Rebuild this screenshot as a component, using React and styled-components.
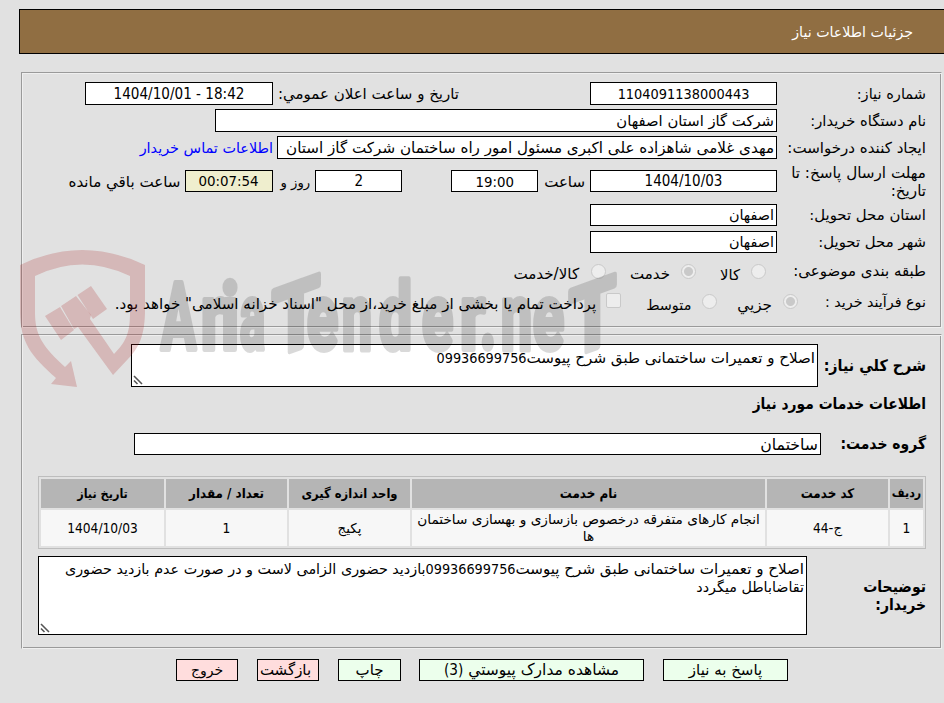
import React from 'react';
import styled, { createGlobalStyle } from 'styled-components';

const condensed = '"DejaVu Sans Condensed", "DejaVu Sans", sans-serif';

const GlobalStyle = createGlobalStyle`
    body {
        margin: 0;
        background-color: #e1e1e1;
        color: #000;
        font-family: "DejaVu Sans", sans-serif;
        font-size: 15px;
    }
    * {
        box-sizing: border-box;
    }
`;

const Page = styled.div`
    direction: rtl;
    position: relative;
    width: 944px;
    height: 703px;
    padding-top: 9px;
    overflow: hidden;
`;

const Header = styled.header`
    height: 45px;
    margin-left: 19px;
    padding-right: 31px;
    display: flex;
    align-items: center;
    background-color: #906e42;
    border: 1px solid #000;
    border-right: none;
    color: #fff;
    font-size: 14.2px;
`;

const Panel = styled.section`
    width: 921px;
    height: ${({ $height }) => $height}px;
    margin: ${({ $top }) => $top}px 2px 0 0;
    padding: ${({ $pad }) => $pad}px 15px 0 15px;
    border: 1px solid #9a9a9a;
    border-right-color: #efefef;
    border-bottom-color: #efefef;
    box-shadow: inset 1px 1px #efefef, inset -1px -1px #9a9a9a;
`;

const Row = styled.div`
    display: flex;
    align-items: center;
    height: ${({ $height }) => $height || 27}px;
    margin-top: ${({ $top }) => $top || 0}px;
    white-space: nowrap;
`;

const Text = styled.span`
    font-size: ${({ $size }) => $size || 15}px;
    font-weight: ${({ $bold }) => ($bold ? 'bold' : 'normal')};
    font-family: ${({ $bold }) => ($bold ? condensed : 'inherit')};
    margin-right: ${({ $gap }) => $gap || 0}px;
    position: relative;
    top: ${({ $drop }) => $drop || 0}px;
    white-space: nowrap;
`;

const Label = styled.div`
    flex: none;
    width: ${({ $width }) => $width || 149}px;
    padding-top: ${({ $pad }) => $pad || 0}px;
    font-size: ${({ $size }) => $size || 14.9}px;
    font-weight: ${({ $bold }) => ($bold ? 'bold' : 'normal')};
    font-family: ${({ $bold }) => ($bold ? condensed : 'inherit')};
    line-height: 18px;
`;

const Num = styled.span`
    font-family: ${condensed};
    font-size: ${({ $size }) => $size || 14.3}px;
`;

const Field = styled.div`
    flex: none;
    display: flex;
    align-items: center;
    justify-content: ${({ $center }) => ($center ? 'center' : 'flex-start')};
    width: ${({ $width }) => $width}px;
    height: ${({ $height }) => $height || 23}px;
    margin-right: ${({ $gap }) => $gap || 0}px;
    padding: 0 2px;
    background-color: ${({ $bg }) => $bg || '#fff'};
    border: 1px solid #000;
    font-size: ${({ $size }) => $size || 14.8}px;
    overflow: hidden;
`;

const Link = styled.a`
    margin-right: 4px;
    color: #0000ff;
    font-size: 14.4px;
    text-decoration: none;
`;

const Radio = styled.span`
    flex: none;
    position: relative;
    width: 15px;
    height: 15px;
    margin-right: ${({ $gap }) => $gap || 0}px;
    border: 1px solid #c9c9c9;
    border-radius: 50%;
    background: ${({ $checked }) =>
        $checked ? 'radial-gradient(circle, #c9c9c9 4px, #ededed 5px)' : '#ededed'};
`;

const Checkbox = styled(Radio)`
    border-radius: 2px;
    top: -1px;
`;

const TextArea = styled.div`
    flex: none;
    position: relative;
    width: ${({ $width }) => $width}px;
    height: ${({ $height }) => $height}px;
    padding: ${({ $pad }) => $pad || 3}px 2px 0;
    background-color: #fff;
    border: 1px solid #000;
    line-height: 18px;
`;

const Grip = styled.svg`
    position: absolute;
    left: 1px;
    bottom: 1px;
`;

const Table = styled.div`
    display: grid;
    grid-template-columns: 33px 121px 353px 121px 121px 123px;
    grid-template-rows: 29px 36px;
    gap: 2px;
    width: 888px;
    height: 73px;
    padding: 2px;
    margin-top: 17px;
    border: 1px solid #bdbdbd;
`;

const Cell = styled.div`
    display: flex;
    align-items: center;
    justify-content: center;
    text-align: center;
    background-color: #f7f7f7;
    font-size: ${({ $size }) => $size || 13.4}px;
    line-height: 17px;
`;

const HeadCell = styled(Cell)`
    background-color: #b5b5b5;
    font-family: ${condensed};
    font-size: ${({ $size }) => $size || 13.3}px;
    font-weight: bold;
    white-space: nowrap;
`;

const Actions = styled.div`
    display: flex;
    gap: 19px;
    margin: 10px 156px 0 0;
`;

const Button = styled.button`
    flex: none;
    width: ${({ $width }) => $width}px;
    height: 22px;
    margin-right: ${({ $shift }) => $shift || 0}px;
    padding: 0 ${({ $pad }) => $pad || 0}px 0 0;
    background-color: ${({ $danger }) => ($danger ? '#ffdddd' : '#ecffec')};
    border: 1px solid #000;
    color: #000;
    font-family: inherit;
    font-size: ${({ $size }) => $size || 15}px;
    line-height: 20px;
    white-space: nowrap;
`;

const Watermark = styled.svg`
    position: absolute;
    left: 0;
    top: 240px;
    direction: ltr;
    pointer-events: none;
`;

const Resize = () => (
    <Grip width="10" height="10" viewBox="0 0 10 10" stroke="#555" strokeWidth="1.6">
        <path d="M1 1 L9 9 M1 5.5 L4.5 9" />
    </Grip>
);

const letters = [
    ['A', 161, 35], ['r', 201, 23], ['i', 221, 18], ['a', 240, 25], ['T', 272, 48],
    ['e', 307, 31], ['n', 342, 30], ['d', 379, 33], ['e', 422, 31], ['r', 460, 25],
    ['.', 480, 16], ['n', 501, 31], ['e', 533, 31], ['T', 569, 47],
];

// the two T's have a roof rising to the right
const slant = (char, x, width) => {
    if (char !== 'T') return undefined;
    const mid = x + width / 2;
    return `translate(${mid} 0) skewY(-20) translate(${-mid} 0)`;
};

const Logo = () => (
    <Watermark width="640" height="160" viewBox="0 240 640 160">
        <g fill="#a51414" fillOpacity="0.2">
            <path d="M20 265 Q82 235 145 265 V310 C145 335 139 348 128 359 L113 375 L78 327 L74 329 L61 306 L76 296 L91 315 L90 319 L114 354 C126 342 130 333 130 313 V276 Q82 253 35 276 V313 C35 335 43 347 65 367 L71 361 L77 387 L51 384 L56 378 C31 356 20 342 20 311 Z" />
            <path d="M77.5 295 L91 286 L107 309 L93 319 Z" />
            <path d="M45 316 L60 307 L74 330 L61 340 Z" />
        </g>
        <g
            opacity="0.145"
            fill="#000"
            stroke="#000"
            strokeWidth="6"
            strokeLinejoin="round"
            fontFamily="Roboto, sans-serif"
            fontWeight="bold"
            fontSize="93"
        >
            {letters.map(([char, x, width]) => (
                <text
                    key={x}
                    x={x}
                    y="349"
                    textLength={width}
                    lengthAdjust="spacingAndGlyphs"
                    transform={slant(char, x, width)}
                >
                    {char}
                </text>
            ))}
        </g>
    </Watermark>
);

const App = () => {
    return (
        <Page>
            <GlobalStyle />
            <Header>جزئیات اطلاعات نیاز</Header>

            <Panel $height={256} $top={18} $pad={7}>
                <Row>
                    <Label $size={14.6}>شماره نیاز:</Label>
                    <Field $width={187} $center><Num $size={14.4}>1104091138000443</Num></Field>
                    <Text $gap={131} $size={15}>تاریخ و ساعت اعلان عمومي:</Text>
                    <Field $width={188} $gap={5} $center><Num $size={15.1} dir="ltr">1404/10/01 - 18:42</Num></Field>
                </Row>
                <Row>
                    <Label $size={14.7}>نام دستگاه خریدار:</Label>
                    <Field $width={562} $size={14.8}>شرکت گاز استان اصفهان</Field>
                </Row>
                <Row>
                    <Label $size={15.05}>ایجاد کننده درخواست:</Label>
                    <Field $width={500} $size={15.15}>
                        مهدی غلامی شاهزاده علی اکبری مسئول امور راه ساختمان شرکت گاز استان
                    </Field>
                    <Link>اطلاعات تماس خریدار</Link>
                </Row>
                <Row $height={40}>
                    <Label $size={15.2} $pad={2}>مهلت ارسال پاسخ: تا<br />تاریخ:</Label>
                    <Field $width={187} $height={22} $center><Num $size={15}>1404/10/03</Num></Field>
                    <Text $gap={5} $drop={1}>ساعت</Text>
                    <Field $width={87} $height={22} $gap={6} $center><Num $size={14.8}>19:00</Num></Field>
                    <Field $width={87} $height={22} $gap={49} $center><Num $size={15}>2</Num></Field>
                    <Text $gap={5} $size={13.2} $drop={1}>روز و</Text>
                    <Field $width={88} $height={22} $gap={8} $bg="#efeece" $center><Num $size={14.9}>00:07:54</Num></Field>
                    <Text $gap={4} $size={15.1} $drop={1}>ساعت باقي مانده</Text>
                </Row>
                <Row $height={28}>
                    <Label>استان محل تحویل:</Label>
                    <Field $width={187} $height={22} $size={14.4}>اصفهان</Field>
                </Row>
                <Row $height={26}>
                    <Label>شهر محل تحویل:</Label>
                    <Field $width={187} $height={22} $size={14.4}>اصفهان</Field>
                </Row>
                <Row $height={32}>
                    <Label $width={160} $size={15}>طبقه بندی موضوعی:</Label>
                    <Radio />
                    <Text $gap={11} $size={14.8} $drop={3}>کالا</Text>
                    <Radio $gap={24} $checked />
                    <Text $gap={11} $size={15} $drop={3}>خدمت</Text>
                    <Radio $gap={24} />
                    <Text $gap={12} $size={15.1} $drop={3}>کالا/خدمت</Text>
                </Row>
                <Row $height={29}>
                    <Label $width={128} $size={14.3}>نوع فرآیند خرید :</Label>
                    <Radio $checked />
                    <Text $gap={11} $size={15.2} $drop={3}>جزیي</Text>
                    <Radio $gap={20} />
                    <Text $gap={11} $size={14.4} $drop={3}>متوسط</Text>
                    <Checkbox $gap={25} />
                    <Text $gap={10} $size={15.1} $drop={2}>
                        پرداخت تمام یا بخشی از مبلغ خرید،از محل "اسناد خزانه اسلامی" خواهد بود.
                    </Text>
                </Row>
            </Panel>

            <Panel $height={315} $top={6} $pad={9}>
                <Row $height={43}>
                    <Label $width={108} $size={15.9} $pad={1} $bold>شرح کلي نیاز:</Label>
                    <TextArea $width={687} $height={43} $pad={4}>
                        <Text $size={15.1}>اصلاح و تعمیرات ساختمانی طبق شرح پیوست</Text>
                        <Num>09936699756</Num>
                        <Resize />
                    </TextArea>
                </Row>
                <Row $height={34}>
                    <Text $size={15.4} $bold>اطلاعات خدمات مورد نیاز</Text>
                </Row>
                <Row $height={22} $top={12}>
                    <Label $width={105} $size={15.5} $bold>گروه خدمت:</Label>
                    <Field $width={687} $height={22} $size={15.7}>ساختمان</Field>
                </Row>
                <Row $height={4} />
                <Table>
                    <HeadCell $size={12.3}>ردیف</HeadCell>
                    <HeadCell>کد خدمت</HeadCell>
                    <HeadCell>نام خدمت</HeadCell>
                    <HeadCell $size={12.9}>واحد اندازه گیری</HeadCell>
                    <HeadCell>تعداد / مقدار</HeadCell>
                    <HeadCell $size={12.5}>تاریخ نیاز</HeadCell>
                    <Cell><Num $size={13.6}>1</Num></Cell>
                    <Cell><span>ج-<Num $size={13.6}>44</Num></span></Cell>
                    <Cell $size={13.65}>
                        انجام کارهای متفرقه درخصوص بازسازی و بهسازی ساختمان<br />ها
                    </Cell>
                    <Cell>پکیج</Cell>
                    <Cell><Num $size={13.6}>1</Num></Cell>
                    <Cell><Num $size={13.6}>1404/10/03</Num></Cell>
                </Table>
                <Row $height={79} $top={7}>
                    <Label $width={119} $size={15.6} $bold>توضیحات<br />خریدار:</Label>
                    <TextArea $width={769} $height={79}>
                        <Text $size={15.1}>اصلاح و تعمیرات ساختمانی طبق شرح پیوست</Text>
                        <Num>09936699756</Num>
                        <Text $size={14.35}>بازدید حضوری الزامی لاست و در صورت عدم بازدید حضوری</Text>
                        <br />
                        <Text $size={14.3}>تقاضاباطل میگردد</Text>
                        <Resize />
                    </TextArea>
                </Row>
            </Panel>

            <Actions>
                <Button $width={125}>پاسخ به نیاز</Button>
                <Button $width={225} $size={15.5}>مشاهده مدارک پیوستي <Num $size={15.2}>(3)</Num></Button>
                <Button $width={63} $shift={-1}>چاپ</Button>
                <Button $width={62} $pad={5} $danger>بازگشت</Button>
                <Button $width={62} $size={14} $danger>خروج</Button>
            </Actions>

            <Logo />
        </Page>
    );
};

export default App;
